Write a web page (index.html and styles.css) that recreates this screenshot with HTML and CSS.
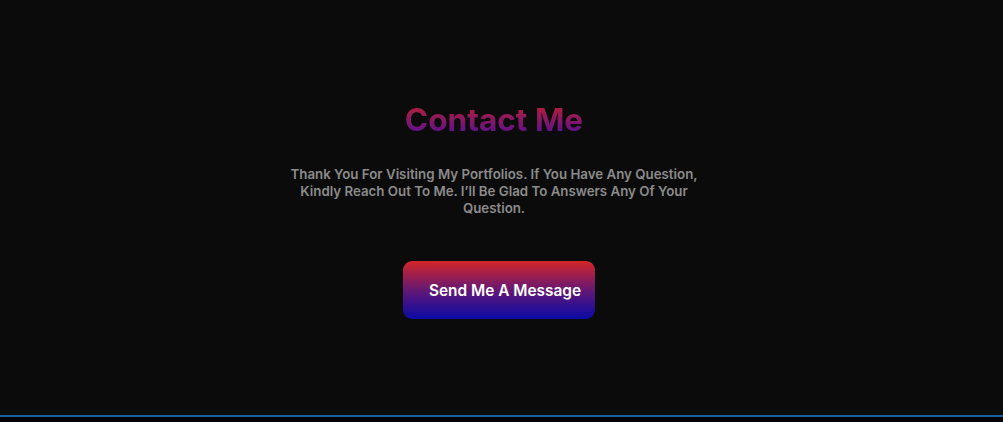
FILE: index.html
```html
<!DOCTYPE html>
<html>
<head>
<meta charset="utf-8">
<link rel="stylesheet" href="styles.css">
</head>
<body>
<main class="contact">
  <h1 class="title">Contact Me</h1>
  <p class="text">Thank You For Visiting My Portfolios. If You Have Any Question, Kindly Reach Out To Me. I’ll Be Glad To Answers Any Of Your Question.</p>
  <a class="btn" href="#">Send Me A Message</a>
</main>
<div class="rule"></div>
</body>
</html>
```
FILE: styles.css
```css
html, body {
  margin: 0;
  padding: 0;
  background: #000;
}
body {
  font-family: Inter, "Noto Sans", sans-serif;
  height: 422px;
  overflow: hidden;
}
.contact {
  background: #0b0b0b;
  height: 415px;
  display: flex;
  flex-direction: column;
  align-items: center;
  box-sizing: border-box;
  padding-top: 98px;
  padding-right: 15px;
}
.title {
  margin: 0;
  font-size: 31.6px;
  font-weight: 700;
  line-height: 44px;
  background: linear-gradient(to bottom, #b01f3a 20%, #5e1090 80%);
  -webkit-background-clip: text;
  background-clip: text;
  color: transparent;
}
.text {
  margin: 24px 0 0;
  width: 430px;
  text-align: center;
  font-size: 13.3px;
  font-weight: 600;
  line-height: 17px;
  color: #8b8b8b;
}
.btn {
  margin-top: 44px;
  margin-left: 10px;
  width: 192px;
  height: 58px;
  box-sizing: border-box;
  padding-left: 26px;
  border-radius: 9px;
  display: flex;
  align-items: center;
  background: linear-gradient(to bottom, #d42628, #5a167a 55%, #0a0aa4);
  color: #fff;
  font-size: 15.4px;
  font-weight: 600;
  text-decoration: none;
}
.rule {
  height: 2px;
  background: #1a5f9a;
}
```
